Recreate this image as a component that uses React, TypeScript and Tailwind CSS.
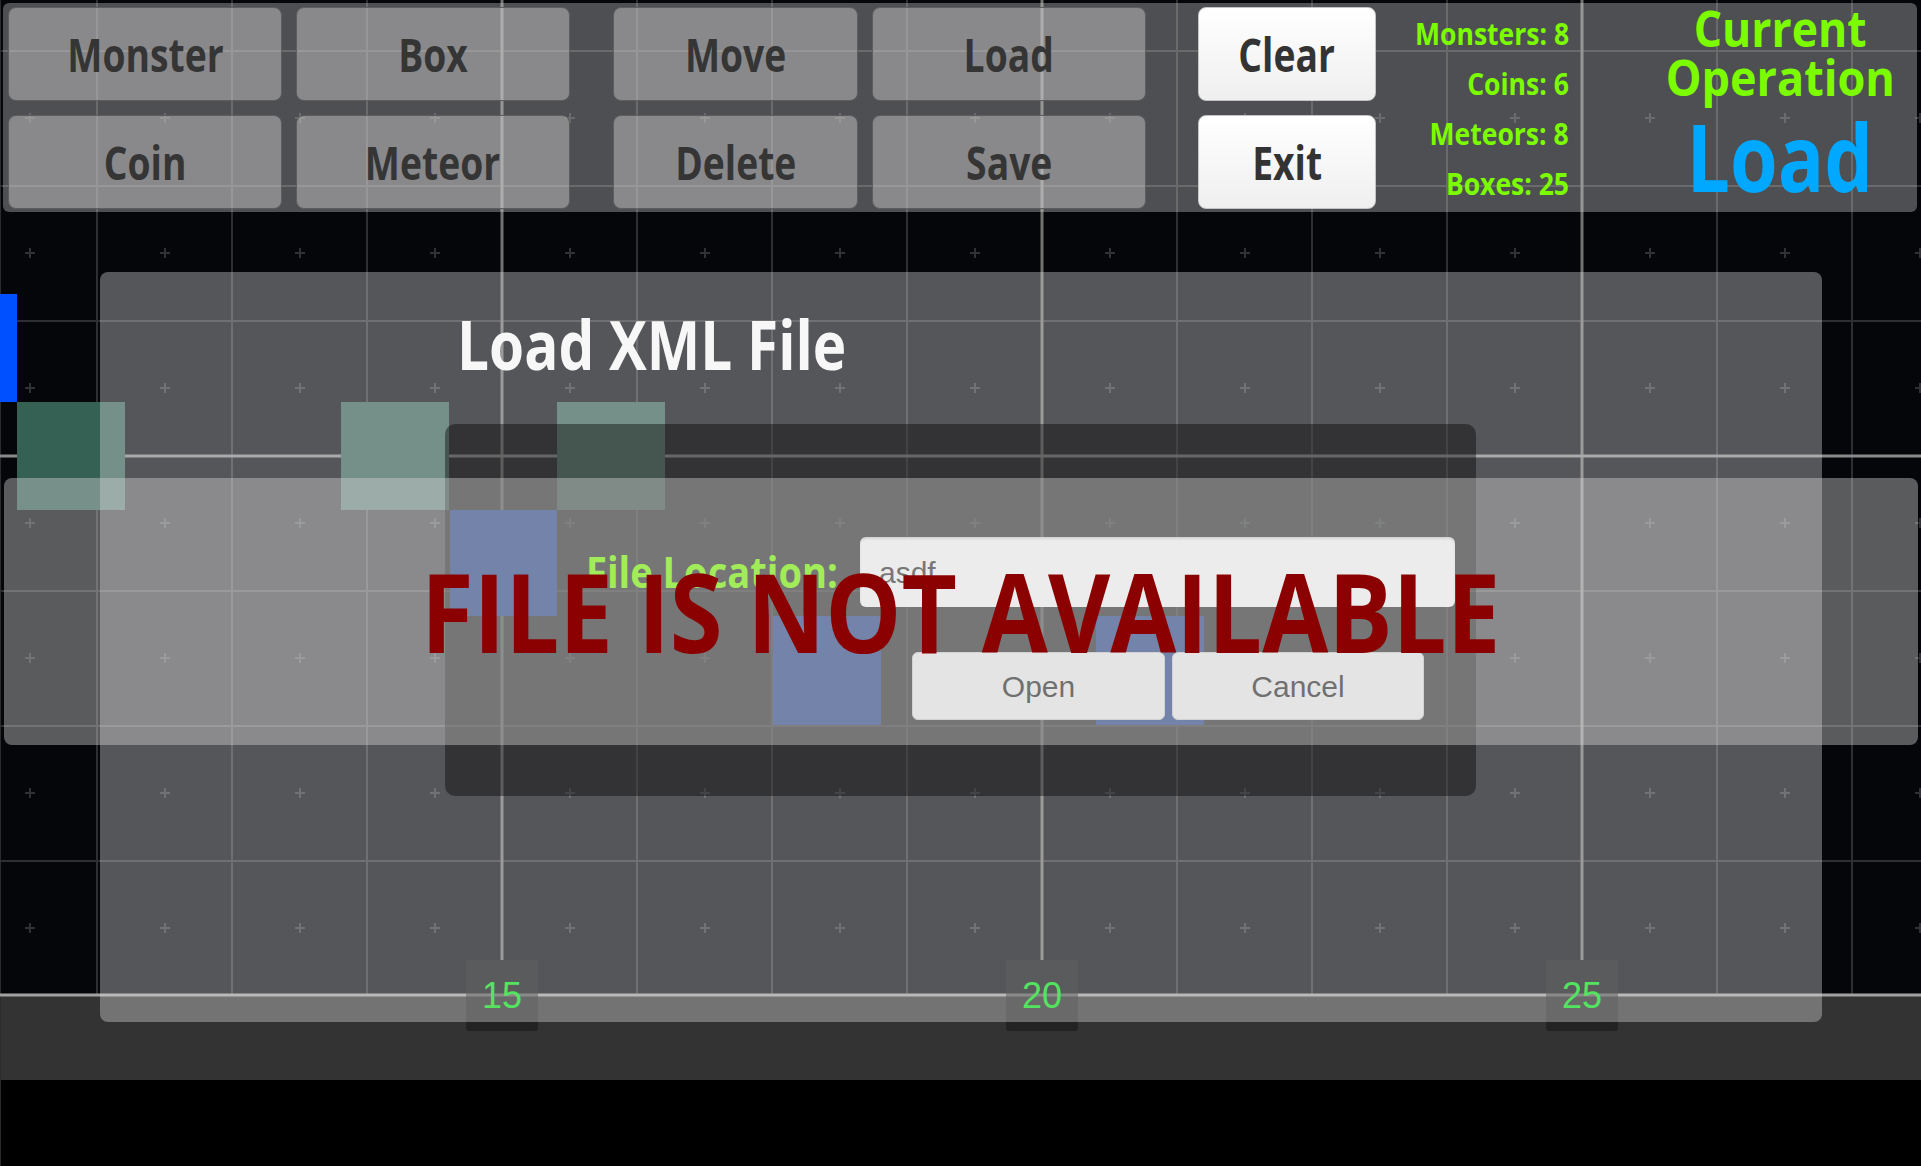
import React from "react";

// condensed bold face: Open Sans squeezed horizontally
const COND = "font-['Open_Sans',sans-serif] font-bold inline-block whitespace-nowrap";
const SANS = "font-['Liberation_Sans',Arial,sans-serif]";

// grid geometry (px)
const CELL = 135;
const COLS_X = Array.from({ length: 14 }, (_, i) => 97 + i * CELL);
const ROWS_Y = Array.from({ length: 7 }, (_, i) => 51 + i * CELL);
const MARK_X = Array.from({ length: 15 }, (_, i) => 30 + i * CELL);
const MARK_Y = Array.from({ length: 7 }, (_, i) => 118 + i * CELL);
const isMajorX = (x: number) => (x - 502) % 540 === 0;
const isMajorY = (y: number) => y === 456;

const RULER = [
    { x: 502, label: "15" },
    { x: 1042, label: "20" },
    { x: 1582, label: "25" },
];

function Grid() {
    return (
        <svg className="absolute left-0 top-0" width={1921} height={1000}>
            {COLS_X.filter((x) => !isMajorX(x)).map((x) => (
                <line key={`vx${x}`} x1={x} y1={0} x2={x} y2={995} stroke="#2e2f31" strokeWidth={2} />
            ))}
            {ROWS_Y.filter((y) => !isMajorY(y)).map((y) => (
                <line key={`hy${y}`} x1={0} y1={y} x2={1921} y2={y} stroke="#2e2f31" strokeWidth={2} />
            ))}
            {COLS_X.filter(isMajorX).map((x) => (
                <line key={`mx${x}`} x1={x} y1={0} x2={x} y2={960} stroke="#727272" strokeWidth={3} />
            ))}
            {ROWS_Y.filter(isMajorY).map((y) => (
                <line key={`my${y}`} x1={0} y1={y} x2={1921} y2={y} stroke="#8a8a8a" strokeWidth={3} />
            ))}
            <line x1={0} y1={995} x2={1921} y2={995} stroke="#a2a2a2" strokeWidth={3} />
            {MARK_Y.map((y) =>
                MARK_X.map((x) => (
                    <path
                        key={`p${x}-${y}`}
                        d={`M${x - 5} ${y}H${x + 5}M${x} ${y - 5}V${y + 5}`}
                        stroke="#2f3134"
                        strokeWidth={2}
                    />
                ))
            )}
        </svg>
    );
}

function ToolButton({ label, w }: { label: string; w: string }) {
    return (
        <div className={`${w} h-[94px] rounded-[8px] border border-[#5e5e5e] bg-[rgba(196,196,196,0.5)] flex items-center justify-center`}>
            <span className={`${COND} text-[46px] leading-none scale-x-[0.81] text-[#353535]`}>{label}</span>
        </div>
    );
}

function WhiteButton({ label }: { label: string }) {
    return (
        <div className="w-[178px] h-[94px] rounded-[8px] border border-[#c4c4c4] bg-linear-to-b from-[#ffffff] to-[#efefef] flex items-center justify-center">
            <span className={`${COND} text-[46px] leading-none scale-x-[0.81] text-[#333333]`}>{label}</span>
        </div>
    );
}

function Toolbar() {
    return (
        <div className="absolute left-[3px] top-[3px] w-[1914px] h-[209px] rounded-[6px] bg-[rgba(219,219,219,0.35)] flex pl-[5px] pt-[4px]">
            <div className="grid grid-cols-[274px_274px] gap-[14px] h-fit">
                <ToolButton label="Monster" w="w-[274px]" />
                <ToolButton label="Box" w="w-[274px]" />
                <ToolButton label="Coin" w="w-[274px]" />
                <ToolButton label="Meteor" w="w-[274px]" />
            </div>
            <div className="ml-[43px] grid grid-cols-[245px_274px] gap-[14px] h-fit">
                <ToolButton label="Move" w="w-[245px]" />
                <ToolButton label="Load" w="w-[274px]" />
                <ToolButton label="Delete" w="w-[245px]" />
                <ToolButton label="Save" w="w-[274px]" />
            </div>
            <div className="ml-[52px] flex flex-col gap-[14px]">
                <WhiteButton label="Clear" />
                <WhiteButton label="Exit" />
            </div>
            <div className="w-[193px] pt-[1px] flex flex-col items-end text-[31px] leading-[50px] text-[#7cfc00]">
                <span className={`${COND} origin-right scale-x-[0.855]`}>Monsters: 8</span>
                <span className={`${COND} origin-right scale-x-[0.855]`}>Coins: 6</span>
                <span className={`${COND} origin-right scale-x-[0.855]`}>Meteors: 8</span>
                <span className={`${COND} origin-right scale-x-[0.855]`}>Boxes: 25</span>
            </div>
            <div className="ml-[74px] w-[274px] flex flex-col items-center">
                <div className="h-[46px] flex items-end">
                    <span className={`${COND} text-[50px] leading-[49px] scale-x-[0.89] text-[#7cfc00]`}>Current</span>
                </div>
                <span className={`${COND} text-[50px] leading-[49px] scale-x-[0.9] text-[#7cfc00]`}>Operation</span>
                <span className={`${COND} mt-[7px] text-[94px] leading-none scale-x-[0.82] text-[#00a8ff]`}>Load</span>
            </div>
        </div>
    );
}

function DialogButton({ label, w }: { label: string; w: string }) {
    return (
        <div
            className={`${w} h-[68px] rounded-[6px] border border-[#d0d0d0] bg-[#eeeeee] flex items-center justify-center text-[30px] text-[#2a2a2a] ${SANS}`}
        >
            {label}
        </div>
    );
}

function LoadDialog() {
    return (
        <div className="absolute left-[100px] top-[272px] w-[1722px] h-[750px] rounded-[8px] bg-[rgba(224,224,224,0.37)] pl-[345px] pt-[38px]">
            <div className="pl-[12px] h-[68px]">
                <span className={`${COND} origin-left text-[68px] leading-none scale-x-[0.834] text-[#f7f7f7]`}>Load XML File</span>
            </div>
            <div className="relative mt-[46px] w-[1031px] h-[372px] rounded-[10px] bg-[rgba(0,0,0,0.4)]">
                {/* boxes placed on the level, drawn above the dialog backdrop */}
                <div className="absolute left-[5px] top-[86px] w-[107px] h-[106px] bg-[#2e4a8c]" />
                <div className="absolute left-[328px] top-[192px] w-[108px] h-[109px] bg-[#2e4a8c]" />
                <div className="absolute left-[651px] top-[192px] w-[108px] h-[109px] bg-[#2e4a8c]" />
                <div className="relative pt-[113px]">
                    <div className="flex items-center">
                        <div className="w-[415px] pl-[141px]">
                            <span className={`${COND} origin-left text-[43px] leading-none scale-x-[0.886] text-[#7cfc00]`}>File Location:</span>
                        </div>
                        <div className={`w-[595px] h-[70px] rounded-[6px] bg-[#fbfbfb] shadow-[inset_0_2px_2px_rgba(0,0,0,0.15)] flex items-center pl-[19px] text-[30px] text-[#363636] ${SANS}`}>
                            asdf
                        </div>
                    </div>
                    <div className="mt-[45px] ml-[467px] flex gap-[7px]">
                        <DialogButton label="Open" w="w-[253px]" />
                        <DialogButton label="Cancel" w="w-[252px]" />
                    </div>
                </div>
            </div>
        </div>
    );
}

export default function App() {
    return (
        <div className="relative w-[1921px] h-[1166px] overflow-hidden bg-black">
            <div className="h-[995px] bg-[#04060a]" />
            <div className="h-[85px] bg-[#333333]" />
            <div className="absolute left-0 top-0 w-px h-[1166px] bg-[#2c2c2c]" />

            <Grid />

            {RULER.map((r) => (
                <div
                    key={r.label}
                    style={{ left: r.x - 36 }}
                    className={`absolute top-[960px] w-[72px] h-[71px] rounded-b-[3px] bg-[rgba(22,22,22,0.52)] flex items-center justify-center text-[36px] text-[#00e614] ${SANS}`}
                >
                    {r.label}
                </div>
            ))}

            {/* level objects */}
            <div className="absolute left-0 top-[294px] w-[17px] h-[108px] bg-[#0050ff]" />
            <div className="absolute left-[17px] top-[402px] w-[108px] h-[108px] bg-[#356155]" />
            <div className="absolute left-[341px] top-[402px] w-[108px] h-[108px] bg-[#356155]" />
            <div className="absolute left-[557px] top-[402px] w-[108px] h-[108px] bg-[#356155]" />

            <Toolbar />
            <LoadDialog />

            <div className="absolute left-[4px] top-[478px] w-[1914px] h-[267px] rounded-[8px] bg-[rgba(214,214,214,0.41)] flex items-center justify-center pb-[4px]">
                <span className={`${COND} text-[110px] leading-none scale-x-[0.871] text-[#8b0000]`}>FILE IS NOT AVAILABLE</span>
            </div>
        </div>
    );
}
